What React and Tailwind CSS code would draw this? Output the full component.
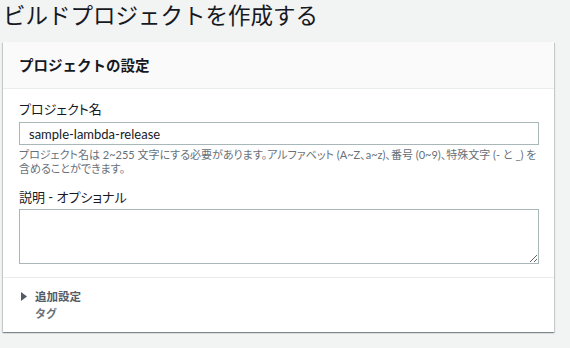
export default function App() {
  const jp = "font-['Lato','Noto_Sans_CJK_JP',sans-serif]"
  return (
    <div className={`w-full h-[348px] overflow-hidden bg-[#f2f3f3] pl-[3px] ${jp}`}>
      <h1 className="text-[22.5px] leading-[28px] text-[#16191f] font-normal font-['Noto_Sans_CJK_JP',sans-serif]">ビルドプロジェクトを作成する</h1>

      <div className="mt-[14px] w-[551px] bg-white shadow-[0_1px_1px_0_rgba(0,28,36,0.3),1px_1px_1px_0_rgba(0,28,36,0.15),-1px_1px_1px_0_rgba(0,28,36,0.15)]">
        <div className="h-[47px] bg-[#fafafa] border-b border-[#eaeded] flex items-center px-[16px]">
          <h2 className="text-[14.5px] font-bold text-[#16191f] font-['Noto_Sans_CJK_JP',sans-serif]">プロジェクトの設定</h2>
        </div>

        <div className="px-[16px] pt-[11px] pb-[13px] border-b border-[#eaeded] [font-feature-settings:'palt']">
          <label className="block text-[13px] leading-[18px] text-[#16191f]">プロジェクト名</label>
          <input
            className="mt-[4px] block w-[520px] h-[23px] border border-[#aab7b8] px-[9px] text-[13px] text-[#16191f] outline-none"
            defaultValue="sample-lambda-release"
          />
          <p className="mt-[3px] w-[520px] text-[11px] leading-[14px] text-[#687078]">
            プロジェクト名は 2~255 文字にする必要があります。アルファベット (A~Z、a~z)、番号 (0~9)、特殊文字 (- と _) を含めることができます。
          </p>

          <label className="block mt-[12px] text-[13px] leading-[18px] text-[#16191f]">説明 - オプショナル</label>
          <textarea className="mt-[3px] block w-[520px] h-[55px] border border-[#aab7b8] px-[9px] py-[4px] text-[13px] outline-none" />
        </div>

        <div className="px-[18px] pt-[10px] pb-[10px]">
          <div className="flex items-center gap-[8px]">
            <svg width="6" height="9" viewBox="0 0 6 9" className="shrink-0">
              <path d="M0 0 L6 4.5 L0 9 Z" fill="#545b64" />
            </svg>
            <span className="text-[11.5px] leading-[17px] font-bold text-[#545b64]">追加設定</span>
          </div>
          <div className="pl-[14px] text-[11px] leading-[17px] font-bold text-[#687078]">タグ</div>
        </div>
      </div>
    </div>
  )
}
